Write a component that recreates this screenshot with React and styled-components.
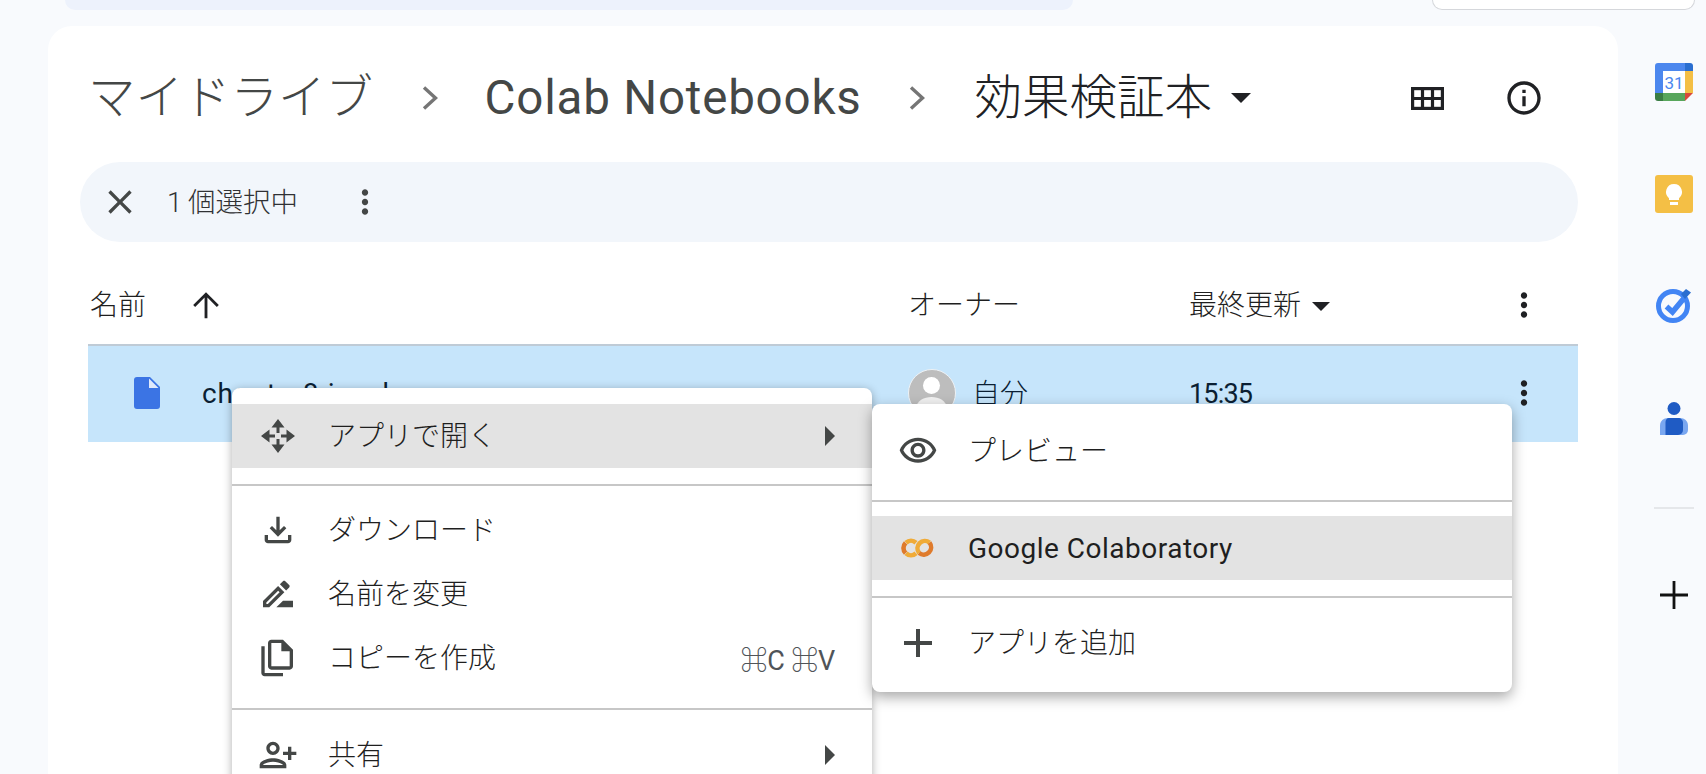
import React from "react";
import styled, { createGlobalStyle } from "styled-components";

const FONT = `Roboto, "Noto Sans CJK JP", "DejaVu Sans", sans-serif`;

const Global = createGlobalStyle`
  html, body { margin: 0; padding: 0; background: #f8fafd; }
  body { font-family: ${FONT}; overflow: hidden; }
  * { box-sizing: border-box; }
`;

const Page = styled.div`
  position: relative;
  width: 1706px;
  height: 774px;
  overflow: hidden;
  display: flex;
  flex-direction: column;
  background: #f8fafd;
`;

const TopBar = styled.header`
  flex: 0 0 26px;
  display: flex;
  align-items: flex-start;
  padding: 0 11px 0 65px;
`;
const SearchStub = styled.div`
  width: 1008px;
  height: 10px;
  background: #edf2fc;
  border-radius: 0 0 28px 28px;
`;
const AccountStub = styled.div`
  margin-left: auto;
  width: 263px;
  height: 10px;
  background: #fff;
  border: 1.5px solid #d5d7db;
  border-top: 0;
  border-radius: 0 0 12px 12px;
`;

const Body = styled.div`
  flex: 1;
  display: flex;
  min-height: 0;
  padding-left: 48px;
`;

const Card = styled.main`
  width: 1570px;
  background: #fff;
  border-radius: 24px 24px 0 0;
  padding: 0 40px 0 32px;
  display: flex;
  flex-direction: column;
`;

const BreadcrumbRow = styled.div`
  height: 136px;
  padding: 8px 0 0 8px;
  display: flex;
  align-items: center;
`;
const Crumb = styled.span`
  font-size: 47.5px;
  font-weight: ${(p) => p.$weight || 300};
  line-height: 60px;
  white-space: nowrap;
  color: ${(p) => p.$color || "#444746"};
  letter-spacing: ${(p) => p.$spacing || "0"};
`;
const CrumbChevron = styled.svg`
  width: 16px;
  height: 24px;
  margin: ${(p) => p.$margin};
  flex: none;
`;
const CrumbCaret = styled.i`
  width: 0;
  height: 0;
  margin-left: 19px;
  border-left: 10px solid transparent;
  border-right: 10px solid transparent;
  border-top: 10px solid #202124;
`;
const HeadActions = styled.div`
  margin-left: auto;
  display: flex;
  align-items: center;
  gap: 60px;
  padding-right: 34px;
`;

const SelectionBar = styled.div`
  height: 80px;
  border-radius: 40px;
  background: #f2f6fb;
  display: flex;
  align-items: center;
  padding-left: 20px;
`;
const SelectionText = styled.span`
  font-size: 27.5px;
  font-weight: 300;
  color: #303134;
  margin-left: 27px;
  width: 179px;
  padding-bottom: 4px;
  white-space: nowrap;
`;

const Table = styled.div`
  margin-left: 8px;
  display: flex;
  flex-direction: column;
`;
const gridCols = "820px 281px 1fr 66px";
const HeaderRow = styled.div`
  height: 102px;
  padding-top: 24px;
  display: grid;
  grid-template-columns: ${gridCols};
  align-items: center;
`;
const HeaderCell = styled.div`
  display: flex;
  align-items: center;
  font-size: 28px;
  font-weight: 300;
  color: #1f1f1f;
  white-space: nowrap;
  line-height: 36px;
  padding-top: 2px;
`;
const NameHead = styled(HeaderCell)`
  padding-left: 2px;
`;
const SortArrow = styled.span`
  display: flex;
  margin: -3px 0 0 40px;
`;
const SortCaret = styled.i`
  width: 0;
  height: 0;
  margin-left: 11px;
  border-left: 9.5px solid transparent;
  border-right: 9.5px solid transparent;
  border-top: 9.5px solid #202124;
`;
const FileRow = styled.div`
  height: 98px;
  border-top: 2px solid #bfcbd6;
  background: #c6e5fb;
  display: grid;
  grid-template-columns: ${gridCols};
  align-items: center;
  padding-bottom: 2px;
`;
const FileName = styled.div`
  display: flex;
  align-items: center;
  padding-left: 46px;
  gap: 42px;
  font-size: 28px;
  letter-spacing: 0.9px;
  color: #0b1f33;
`;
const OwnerCell = styled.div`
  display: flex;
  align-items: center;
  gap: 16px;
  font-size: 28px;
  font-weight: 300;
  color: #0b1f33;
`;
const OwnerName = styled.span`
  padding-bottom: 2px;
`;
const Avatar = styled.div`
  width: 48px;
  height: 48px;
  border-radius: 50%;
  border: 1.5px solid #eef2f5;
  background: #bdbdbd;
  overflow: hidden;
  display: flex;
`;
const TimeCell = styled.div`
  font-size: 27px;
  color: #0b1f33;
  letter-spacing: -0.8px;
  padding-top: 1px;
`;
const DotsCell = styled.div`
  display: flex;
  margin-left: -7px;
`;

const Rail = styled.aside`
  flex: 1;
  display: flex;
  flex-direction: column;
  align-items: center;
  padding: 37px 0 0 24px;
`;
const RailSlot = styled.div`
  height: 112px;
  width: 40px;
  display: flex;
  justify-content: center;
  align-items: flex-start;
  padding-top: ${(p) => p.$top || "0"};
`;
const RailDivider = styled.div`
  width: 40px;
  height: 2px;
  background: #e5e7ea;
  margin: -4px 0 62px;
`;

const Menu = styled.div`
  position: absolute;
  width: 640px;
  background: #fff;
  border-radius: 8px;
`;
const OpenMenu = styled(Menu)`
  left: 232px;
  top: 388px;
  padding: 16px 0 20px;
  z-index: 1;
  box-shadow: 0 2px 10px rgba(0, 0, 0, 0.32);
`;
const AppMenu = styled(Menu)`
  left: 872px;
  top: 404px;
  padding: 15px 0 17px;
  z-index: 2;
  box-shadow: 0 5px 14px rgba(0, 0, 0, 0.35);
`;
const MenuRow = styled.div`
  height: 64px;
  display: flex;
  align-items: center;
  background: ${(p) => (p.$active ? "#e3e3e3" : "transparent")};
  padding-right: 37px;
`;
const MenuIcon = styled.span`
  width: 91px;
  margin-right: 5px;
  display: flex;
  justify-content: center;
  flex: none;
`;
const MenuLabel = styled.span`
  font-size: 28px;
  font-weight: 300;
  white-space: nowrap;
  color: #1f1f1f;
  padding-bottom: 4px;
`;
const AppName = styled.span`
  font-size: 28px;
  white-space: nowrap;
  color: #1f1f1f;
  letter-spacing: 0.5px;
`;
const Shortcut = styled.span`
  margin-left: auto;
  font-size: 27px;
  color: #505458;
  white-space: nowrap;
  letter-spacing: -0.2px;
`;
const SubArrow = styled.i`
  margin-left: auto;
  width: 0;
  height: 0;
  border-top: 10px solid transparent;
  border-bottom: 10px solid transparent;
  border-left: 10px solid #444746;
`;
const MenuDivider = styled.div`
  height: 2px;
  background: #c7c7c7;
  margin: ${(p) => p.$margin};
`;

const Icon = ({ size = 40, color = "#444746", d }) => (
  <svg width={size} height={size} viewBox="0 0 24 24" fill={color}>
    <path d={d} />
  </svg>
);

const P = {
  close: "M19 6.41L17.59 5 12 10.59 6.41 5 5 6.41 10.59 12 5 17.59 6.41 19 12 13.41 17.59 19 19 17.59 13.41 12z",
  dots: "M12 8c1.1 0 2-.9 2-2s-.9-2-2-2-2 .9-2 2 .9 2 2 2zm0 2c-1.1 0-2 .9-2 2s.9 2 2 2 2-.9 2-2-.9-2-2-2zm0 6c-1.1 0-2 .9-2 2s.9 2 2 2 2-.9 2-2-.9-2-2-2z",
  up: "M4.3 12l1.2 1.2L11.15 7.5V20h1.7V7.5l5.65 5.7 1.2-1.2L12 4.3z",
  info: "M11 7h2v2h-2zm0 4h2v6h-2zm1-9C6.48 2 2 6.48 2 12s4.48 10 10 10 10-4.48 10-10S17.52 2 12 2zm0 18c-4.41 0-8-3.59-8-8s3.59-8 8-8 8 3.59 8 8-3.59 8-8 8z",
  download: "M12 16l-5-5 1.4-1.45 2.6 2.6V4h2v8.15l2.6-2.6L17 11l-5 5zM6 20c-.55 0-1.02-.2-1.41-.59C4.2 19.02 4 18.55 4 18v-3h2v3h12v-3h2v3c0 .55-.2 1.02-.59 1.41-.39.39-.86.59-1.41.59H6z",
  rename: "M15 16l-4 4h10v-4h-6zM12.06 7.19L3 16.25V20h3.75l9.06-9.06-3.75-3.75zM5.92 18H5v-.92l7.06-7.06.92.92L5.92 18zM18.71 8.04c.39-.39.39-1.02 0-1.41l-2.34-2.34c-.2-.2-.45-.29-.71-.29s-.51.1-.7.29l-1.83 1.83 3.75 3.75 1.83-1.83z",
  share: "M13 8c0-2.21-1.79-4-4-4S5 5.79 5 8s1.79 4 4 4 4-1.79 4-4zm-2 0c0 1.1-.9 2-2 2s-2-.9-2-2 .9-2 2-2 2 .9 2 2zM1 18v2h16v-2c0-2.66-5.33-4-8-4s-8 1.34-8 4zm2 0c.2-.71 3.3-2 6-2 2.69 0 5.77 1.28 6 2H3zm17-3v-3h3v-2h-3V7h-2v3h-3v2h3v3h2z",
  eye: "M12 6c3.79 0 7.17 2.13 8.82 5.5C19.17 14.87 15.79 17 12 17s-7.17-2.13-8.82-5.5C4.83 8.13 8.21 6 12 6m0-2C7 4 2.73 7.11 1 11.5 2.73 15.89 7 19 12 19s9.27-3.11 11-7.5C21.27 7.11 17 4 12 4zm0 5c1.38 0 2.5 1.12 2.5 2.5S13.38 14 12 14s-2.5-1.12-2.5-2.5S10.62 9 12 9m0-2c-2.48 0-4.5 2.02-4.5 4.5S9.52 16 12 16s4.5-2.02 4.5-4.5S14.48 7 12 7z",
  plus: "M19 13h-6v6h-2v-6H5v-2h6V5h2v6h6v2z",
  railPlus: "M19 12.7h-6.3V19h-1.4v-6.3H5v-1.4h6.3V5h1.4v6.3H19z",
};

const CopyIcon = () => (
  <svg width="40" height="40" viewBox="0 0 24 24" fill="#444746">
    <path fillRule="evenodd" d="M8 1h7l6 6v10c0 1.1-.9 2-2 2H8c-1.1 0-2-.9-2-2V3c0-1.1.9-2 2-2zm0 2v14h11V8h-5V3H8z" />
    <path d="M4 5H2v16c0 1.1.9 2 2 2h11v-2H4V5z" />
  </svg>
);

const GridIcon = () => (
  <svg width="33" height="23" viewBox="0 0 33 23" fill="none" stroke="#202124" strokeWidth="3.2">
    <rect x="1.6" y="1.6" width="29.8" height="19.8" />
    <path d="M1.5 11.5h30M11.5 1.5v20M21.5 1.5v20" />
  </svg>
);

const MoveIcon = () => (
  <svg width="40" height="40" viewBox="0 0 40 40" fill="#444746">
    <path d="M20 3l6.5 8.5h-5V17h-3v-5.5h-5zM20 37l-6.5-8.5h5V23h3v5.5h5zM3 20l8.5-6.5v5H17v3h-5.5v5zM37 20l-8.5 6.5v-5H23v-3h5.5v-5z" />
  </svg>
);

const FileIcon = () => (
  <svg width="26" height="32" viewBox="0 0 26 32">
    <path d="M3 0h13l10 10v19a3 3 0 0 1-3 3H3a3 3 0 0 1-3-3V3a3 3 0 0 1 3-3z" fill="#3b74e4" />
    <path d="M15 1.5V11h9.5z" fill="#dfe9fb" />
  </svg>
);

const ColabLogo = () => (
  <svg width="33" height="20" viewBox="0 0 33 20" fill="none" strokeWidth="4.6">
    <path d="M15 4.7a7.4 7.4 0 0 0-10 0M5 15.3a7.4 7.4 0 0 0 10 0" stroke="#f0ab37" />
    <path d="M4.6 4.8a7.4 7.4 0 0 0 0 10.4" stroke="#df7b2c" />
    <path d="M28.5 4.6a7.4 7.4 0 0 0-10.4 10.4" stroke="#f0ab37" />
    <path d="M28.5 4.6A7.4 7.4 0 0 1 18.1 15" stroke="#df7b2c" />
  </svg>
);

const CalendarIcon = () => (
  <svg width="38" height="38" viewBox="0 0 38 38">
    <path d="M3 0h27v8H8v22H0V3a3 3 0 0 1 3-3z" fill="#4c87ee" />
    <path d="M30 0h5a3 3 0 0 1 3 3v5h-8z" fill="#2a6ed0" />
    <rect x="30" y="8" width="8" height="22" fill="#f4bf45" />
    <path d="M8 30h22v8H8z" fill="#58a65c" />
    <path d="M0 30h8v8H3a3 3 0 0 1-3-3z" fill="#3a7d44" />
    <path d="M30 30h8l-8 8z" fill="#d9483b" />
    <rect x="8" y="8" width="22" height="22" fill="#fff" />
    <text x="19" y="25.5" textAnchor="middle" fontSize="17" fontFamily="Roboto, sans-serif" fill="#4c87ee">31</text>
  </svg>
);

const KeepIcon = () => (
  <svg width="38" height="38" viewBox="0 0 38 38">
    <rect width="38" height="38" rx="3" fill="#f4bf45" />
    <path d="M19 9a8 8 0 0 1 5 14.2V25H14v-1.8A8 8 0 0 1 19 9z" fill="#fff" />
    <rect x="15" y="27" width="8" height="3" fill="#fff" />
  </svg>
);

const TasksIcon = () => (
  <svg width="36" height="36" viewBox="0 0 36 36" fill="none">
    <circle cx="17" cy="19" r="14.5" stroke="#4285f4" strokeWidth="5" />
    <path d="M10.5 19.5l6 5.5L29 10" stroke="#4285f4" strokeWidth="5.5" />
    <path d="M25 7l5-5 5 3.5-6 6.5z" fill="#2a6ed0" />
  </svg>
);

const ContactsIcon = () => (
  <svg width="28" height="33" viewBox="0 0 28 33">
    <circle cx="14" cy="6.5" r="6.5" fill="#1f5bc4" />
    <path d="M8 16h12c4.5 0 8 3 8 7.5V28a5 5 0 0 1-5 5H0v-9.5C0 19 3.5 16 8 16z" fill="#7aa7f0" />
    <path d="M9 16h9c3 0 5 2 5 5v7a5 5 0 0 1-5 5H5.5V20c0-2 1.5-4 3.5-4z" fill="#1f5bc4" />
  </svg>
);

const AvatarArt = () => (
  <svg width="45" height="45" viewBox="0 0 45 45">
    <circle cx="22.5" cy="15.5" r="8.5" fill="#fff" />
    <path d="M6 40c2-10 9-13 16.5-13S37 30 39 40v5H6z" fill="#f1f1f1" />
  </svg>
);

const Chevron = ({ margin }) => (
  <CrumbChevron $margin={margin} viewBox="0 0 16 24" fill="none" stroke="#757575" strokeWidth="3.4">
    <path d="M2 1.5L13.5 12 2 22.5" />
  </CrumbChevron>
);

export default function App() {
  return (
    <Page>
      <Global />
      <TopBar>
        <SearchStub />
        <AccountStub />
      </TopBar>
      <Body>
        <Card>
          <BreadcrumbRow>
            <Crumb>マイドライブ</Crumb>
            <Chevron margin="0 47px 0 48.6px" />
            <Crumb $weight={400} $spacing="0.8px">Colab Notebooks</Crumb>
            <Chevron margin="0 49px 0 47.8px" />
            <Crumb $color="#202124">効果検証本</Crumb>
            <CrumbCaret />
            <HeadActions>
              <GridIcon />
              <Icon d={P.info} color="#202124" />
            </HeadActions>
          </BreadcrumbRow>

          <SelectionBar>
            <Icon d={P.close} />
            <SelectionText>1{"\u2009"}個選択中</SelectionText>
            <Icon d={P.dots} size={38} />
          </SelectionBar>

          <Table>
            <HeaderRow>
              <NameHead>
                名前
                <SortArrow>
                  <Icon d={P.up} color="#202124" />
                </SortArrow>
              </NameHead>
              <HeaderCell>オーナー</HeaderCell>
              <HeaderCell>
                最終更新
                <SortCaret />
              </HeaderCell>
              <DotsCell>
                <Icon d={P.dots} size={38} color="#202124" />
              </DotsCell>
            </HeaderRow>
            <FileRow>
              <FileName>
                <FileIcon />
                chapter8.ipynb
              </FileName>
              <OwnerCell>
                <Avatar>
                  <AvatarArt />
                </Avatar>
                <OwnerName>自分</OwnerName>
              </OwnerCell>
              <TimeCell>15:35</TimeCell>
              <DotsCell>
                <Icon d={P.dots} size={38} color="#202124" />
              </DotsCell>
            </FileRow>
          </Table>
        </Card>

        <Rail>
          <RailSlot><CalendarIcon /></RailSlot>
          <RailSlot><KeepIcon /></RailSlot>
          <RailSlot><TasksIcon /></RailSlot>
          <RailSlot $top="3px"><ContactsIcon /></RailSlot>
          <RailDivider />
          <Icon d={P.railPlus} size={48} color="#111" />
        </Rail>
      </Body>

      <OpenMenu>
        <MenuRow $active>
          <MenuIcon><MoveIcon /></MenuIcon>
          <MenuLabel>アプリで開く</MenuLabel>
          <SubArrow />
        </MenuRow>
        <MenuDivider $margin="16px 0 12px" />
        <MenuRow>
          <MenuIcon><Icon d={P.download} /></MenuIcon>
          <MenuLabel>ダウンロード</MenuLabel>
        </MenuRow>
        <MenuRow>
          <MenuIcon><Icon d={P.rename} /></MenuIcon>
          <MenuLabel>名前を変更</MenuLabel>
        </MenuRow>
        <MenuRow>
          <MenuIcon><CopyIcon /></MenuIcon>
          <MenuLabel>コピーを作成</MenuLabel>
          <Shortcut>⌘C ⌘V</Shortcut>
        </MenuRow>
        <MenuDivider $margin="18px 0 13px" />
        <MenuRow>
          <MenuIcon><Icon d={P.share} /></MenuIcon>
          <MenuLabel>共有</MenuLabel>
          <SubArrow />
        </MenuRow>
      </OpenMenu>

      <AppMenu>
        <MenuRow>
          <MenuIcon><Icon d={P.eye} /></MenuIcon>
          <MenuLabel>プレビュー</MenuLabel>
        </MenuRow>
        <MenuDivider $margin="17px 0 14px" />
        <MenuRow $active>
          <MenuIcon><ColabLogo /></MenuIcon>
          <AppName>Google Colaboratory</AppName>
        </MenuRow>
        <MenuDivider $margin="16px 0 13px" />
        <MenuRow>
          <MenuIcon><Icon d={P.plus} size={48} /></MenuIcon>
          <MenuLabel>アプリを追加</MenuLabel>
        </MenuRow>
      </AppMenu>
    </Page>
  );
}
